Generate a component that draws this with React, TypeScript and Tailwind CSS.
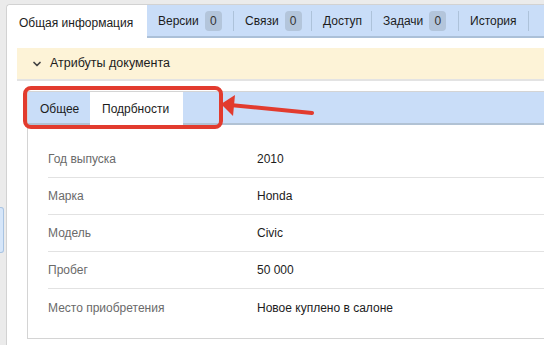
import { ChevronDown } from 'lucide-react'

const topTabs = [
  { label: 'Версии', count: '0', width: 'w-[87px]' },
  { label: 'Связи', count: '0', width: 'w-[78px]' },
  { label: 'Доступ', width: 'w-[60px]' },
  { label: 'Задачи', count: '0', width: 'w-[87px]' },
  { label: 'История', width: 'w-[70px]' },
]

const rows = [
  { label: 'Год выпуска', value: '2010' },
  { label: 'Марка', value: 'Honda' },
  { label: 'Модель', value: 'Civic' },
  { label: 'Пробег', value: '50 000' },
  { label: 'Место приобретения', value: 'Новое куплено в салоне' },
]

export default function App() {
  return (
    <div className="relative w-[544px] h-[345px] overflow-hidden bg-[#ebebeb] pt-[4px] pl-[6px] font-['Liberation_Sans',Arial,sans-serif] text-[12px] text-[#1c1c1c]">
      {/* left sliver */}
      <div className="absolute left-0 top-[207px] w-[4px] h-[46px] bg-[#d6e6f9] border border-l-0 border-[#a9c4e2] rounded-r-[3px]" />

      <div className="h-full bg-white border-l border-t border-[#d2d2d2] rounded-tl-[4px]">
        {/* Top tabs */}
        <div className="flex h-[33px]">
          <div className="w-[140px] pl-[12px] pt-[9px] bg-white rounded-tl-[4px]">Общая информация</div>
          <div className="flex-1 flex bg-[#c9ddf8] border-b-2 border-[#abc0d8]">
            {topTabs.map((t) => (
              <div key={t.label} className={`${t.width} flex items-center shrink-0 h-full`}>
                <div className="flex-1 flex items-center pl-[11px] gap-[6px]">
                  <span>{t.label}</span>
                  {t.count && (
                    <span className="w-[17px] h-[20px] rounded-[4px] bg-[#b3c5db] flex items-center justify-center text-[#333]">
                      {t.count}
                    </span>
                  )}
                </div>
                <div className="w-px h-[20px] bg-[#adc2da]" />
              </div>
            ))}
          </div>
        </div>

        {/* Section header */}
        <div className="ml-[10px] mt-[10px] h-[33px] bg-[#fdf3d7] border-b-2 border-[#e3e3e3] flex items-center">
          <ChevronDown className="w-[12px] h-[12px] ml-[14px] mr-[7px] text-[#444]" strokeWidth={3.5} />
          <span className="text-[12.5px]">Атрибуты документа</span>
        </div>

        {/* Inner tabs */}
        <div className="ml-[20px] mt-[10px] flex h-[34px] border-t border-l border-[#d4d4d4]">
          <div className="w-[62px] pl-[12px] pt-[8px] bg-[#c9ddf8] border-b-2 border-[#b1c2d4]">Общее</div>
          <div className="w-[93px] pl-[12px] pt-[8px] bg-white">Подрбности</div>
          <div className="flex-1 bg-[#c9ddf8] border-b-2 border-[#b1c2d4]" />
        </div>

        {/* Details */}
        <div className="ml-[20px] border-l border-b border-[#d4d4d4] pt-[16px] pb-[12px] pl-[20px]">
          {rows.map((r, i) => (
            <div
              key={r.label}
              className={`h-[37px] grid grid-cols-[209px_1fr] items-center ${
                i < rows.length - 1 ? 'border-b border-[#e2e2e2]' : ''
              }`}
            >
              <span className="text-[#6a6a6a]">{r.label}</span>
              <span className="text-[#1c1c1c]">{r.value}</span>
            </div>
          ))}
        </div>
      </div>

      {/* Annotation */}
      <svg className="absolute left-0 top-0 pointer-events-none" width="544" height="345">
        <rect x="25" y="88" width="196" height="39" rx="6" fill="none" stroke="#e23b2e" strokeWidth="4" />
        <line x1="312" y1="113" x2="230" y2="105" stroke="#e23b2e" strokeWidth="4" strokeLinecap="round" />
        <polygon points="221,104 235,95 233,116" fill="#e23b2e" />
      </svg>
    </div>
  )
}
